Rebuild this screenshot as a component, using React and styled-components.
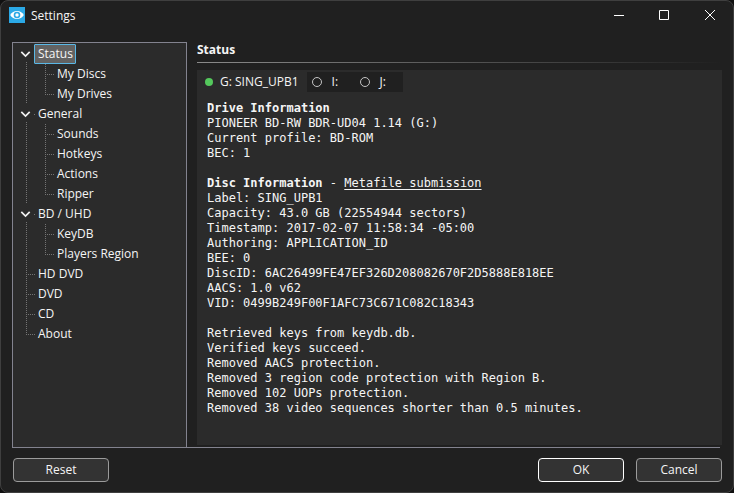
import React, { useState } from 'react'
import styled, { createGlobalStyle, css } from 'styled-components'

const colors = {
  window: '#202020',
  panel: '#2b2b2b',
  frame: '#3f3f3f',
  line: '#83838f',
  text: '#f5f5f5',
  dots: '#747474',
  accent: '#5ab8e6',
}

const GlobalStyle = createGlobalStyle`
  * {
    box-sizing: border-box;
  }

  body {
    margin: 0;
    background: #101010;
    color: ${colors.text};
    font: 12px/20px 'Open Sans', 'Noto Sans', sans-serif;
  }

  button, input {
    font: inherit;
    color: inherit;
  }
`

const Window = styled.div`
  display: flex;
  flex-direction: column;
  min-height: 100vh;
  background: ${colors.window};
  border: 1px solid ${colors.frame};
  border-radius: 8px;
`

const TitleBar = styled.header`
  display: flex;
  align-items: center;
  height: 28px;
  padding-left: 8px;
`

const Title = styled.h1`
  flex: 1;
  margin: 2px 0 0 6px;
  font-size: 12px;
  font-weight: 400;
`

const CaptionButton = styled.button`
  display: flex;
  align-items: center;
  justify-content: center;
  width: 46px;
  height: 28px;
  padding: 0;
  border: 0;
  background: none;
`

const Body = styled.main`
  flex: 1;
  display: flex;
  gap: 10px;
  padding: 13px 11px 0;
`

const Tree = styled.nav`
  flex: none;
  width: 175px;
  padding: 1px 4px;
  background: ${colors.panel};
  border: 1px solid ${colors.line};
  border-bottom: 0;
`

const Branch = styled.ul`
  margin: 0;
  padding: 0;
  list-style: none;
`

const Row = styled.div`
  display: flex;
  height: 20px;
`

const down = `repeating-linear-gradient(to bottom, ${colors.dots} 0 1px, transparent 1px 2px)`
const across = `repeating-linear-gradient(to right, ${colors.dots} 0 1px, transparent 1px 2px)`

const guides = {
  line: css`
    background: ${down} 9px 0 / 1px 20px no-repeat;
  `,
  tee: css`
    background: ${down} 9px 0 / 1px 20px no-repeat,
      ${across} 9px 10px / 9px 1px no-repeat;
  `,
  elbow: css`
    background: ${down} 9px 0 / 1px 10px no-repeat,
      ${across} 9px 10px / 9px 1px no-repeat;
  `,
  none: null,
}

const Guide = styled.span`
  flex: none;
  width: 19px;
  ${({ $kind }) => guides[$kind]}
`

const Toggle = styled.button`
  display: flex;
  align-items: center;
  flex: none;
  width: 19px;
  padding: 0 0 0 3px;
  border: 0;
  background: ${down} 9px 18px / 1px 2px no-repeat,
    ${across} 17px 10px / 1px 1px no-repeat;

  svg {
    transform: rotate(${({ $open }) => ($open ? 0 : -90)}deg);
  }
`

const Item = styled.button`
  margin-left: -2px;
  padding: 0 2px 0 3px;
  border: 1px solid ${({ $active }) => ($active ? colors.accent : 'transparent')};
  border-radius: 1px;
  background: ${({ $active }) => ($active ? '#626262' : 'none')};
  line-height: 18px;
  white-space: nowrap;
`

const Content = styled.section`
  flex: 1;
  display: flex;
  flex-direction: column;
  min-width: 0;
  margin-bottom: 2px;
`

const PageTitle = styled.h2`
  margin: 0 0 5px;
  font-size: 12px;
  line-height: 15px;
  font-weight: 700;
`

const Fade = styled.div`
  height: 1px;
  margin-bottom: 7px;
  background: linear-gradient(to right, #8a8a8a, ${colors.window});
`

const Panel = styled.div`
  flex: 1;
  padding: 2px 10px 0 8px;
  background: ${colors.panel};
`

const Drives = styled.div`
  display: flex;
  height: 20px;
`

const Drive = styled.label`
  display: flex;
  align-items: center;
  gap: 7px;
  margin-right: 8px;
`

const IdleDrives = styled.div`
  display: flex;
  background: ${colors.window};
`

const IdleDrive = styled.label`
  display: flex;
  align-items: center;
  gap: 10px;
  width: 48px;
  padding-left: 5px;
`

const DriveRadio = styled.input`
  appearance: none;
  width: 10px;
  height: 10px;
  margin: 0;
  border: 1px solid #c4c4c4;
  border-radius: 50%;

  &:checked {
    width: 8px;
    height: 8px;
    border: 0;
    background: #54c85c;
  }
`

const Report = styled.div`
  padding: 9px 0 0 2px;
  font: 12px/15px 'DejaVu Sans Mono', 'Liberation Mono', monospace;
`

const Block = styled.p`
  margin: 0 0 15px;
  white-space: pre-line;
`

const Link = styled.a`
  color: inherit;
  text-underline-offset: 2px;
`

const Rule = styled.hr`
  width: calc(100% - 24px);
  height: 1px;
  margin: 0 0 0 11px;
  border: 0;
  background: ${colors.line};
`

const Footer = styled.footer`
  display: flex;
  gap: 12px;
  padding: 10px 11px 10px 12px;
`

const Button = styled.button`
  width: ${({ $wide }) => ($wide ? 96 : 86)}px;
  height: 24px;
  padding: 0;
  border: 1px solid ${({ $primary }) => ($primary ? '#ffffff' : '#9b9b9b')};
  border-radius: 4px;
  background: #333333;
  line-height: 22px;

  &:first-child {
    margin-right: auto;
  }
`

const sections = [
  { name: 'Status', children: ['My Discs', 'My Drives'] },
  { name: 'General', children: ['Sounds', 'Hotkeys', 'Actions', 'Ripper'] },
  { name: 'BD / UHD', children: ['KeyDB', 'Players Region'] },
  { name: 'HD DVD' },
  { name: 'DVD' },
  { name: 'CD' },
  { name: 'About' },
]

const driveInfo = `PIONEER BD-RW BDR-UD04 1.14 (G:)
Current profile: BD-ROM
BEC: 1`

const discInfo = `Label: SING_UPB1
Capacity: 43.0 GB (22554944 sectors)
Timestamp: 2017-02-07 11:58:34 -05:00
Authoring: APPLICATION_ID
BEE: 0
DiscID: 6AC26499FE47EF326D208082670F2D5888E818EE
AACS: 1.0 v62
VID: 0499B249F00F1AFC73C671C082C18343`

const log = `Retrieved keys from keydb.db.
Verified keys succeed.
Removed AACS protection.
Removed 3 region code protection with Region B.
Removed 102 UOPs protection.
Removed 38 video sequences shorter than 0.5 minutes.`

function AppIcon() {
  return (
    <svg width="16" height="16" viewBox="0 0 16 16" aria-hidden="true">
      <rect width="16" height="16" fill="#2ba9e6" />
      <path d="M1.2 8C4 2.6 12 2.6 14.8 8C12 13.4 4 13.4 1.2 8Z" fill="#fff" />
      <circle cx="8" cy="8" r="3.3" fill="#2ba9e6" />
      <circle cx="8" cy="8" r="1.7" fill="#fff" />
    </svg>
  )
}

function CaptionIcon({ d }) {
  return (
    <svg width="12" height="12" viewBox="0 0 12 12" fill="none" stroke="#fff">
      <path d={d} />
    </svg>
  )
}

function SettingsTree() {
  const [selected, setSelected] = useState('Status')
  const [closed, setClosed] = useState({})

  const item = name => (
    <Item $active={selected === name} onClick={() => setSelected(name)}>
      {name}
    </Item>
  )

  return (
    <Tree aria-label="Settings sections">
      <Branch>
        {sections.map(({ name, children }, i) => {
          const last = i === sections.length - 1
          const open = !closed[name]

          return (
            <li key={name}>
              <Row>
                {children ? (
                  <Toggle
                    $open={open}
                    aria-label={`Toggle ${name}`}
                    aria-expanded={open}
                    onClick={() => setClosed({ ...closed, [name]: open })}
                  >
                    <svg width="11" height="8" viewBox="0 0 11 8" fill="none" stroke="#f0f0f0" strokeWidth="1.7">
                      <path d="M1.3 1.8L5.5 6L9.7 1.8" />
                    </svg>
                  </Toggle>
                ) : (
                  <Guide $kind={last ? 'elbow' : 'tee'} />
                )}
                {item(name)}
              </Row>
              {children && open && (
                <Branch>
                  {children.map((child, j) => (
                    <li key={child}>
                      <Row>
                        <Guide $kind={last ? 'none' : 'line'} />
                        <Guide $kind={j === children.length - 1 ? 'elbow' : 'tee'} />
                        {item(child)}
                      </Row>
                    </li>
                  ))}
                </Branch>
              )}
            </li>
          )
        })}
      </Branch>
    </Tree>
  )
}

function App() {
  return (
    <>
      <GlobalStyle />
      <Window>
        <TitleBar>
          <AppIcon />
          <Title>Settings</Title>
          <CaptionButton aria-label="Minimize">
            <CaptionIcon d="M2 6.5H12" />
          </CaptionButton>
          <CaptionButton aria-label="Maximize">
            <CaptionIcon d="M1.5 1.5H10.5V10.5H1.5Z" />
          </CaptionButton>
          <CaptionButton aria-label="Close">
            <CaptionIcon d="M1 1L11 11M11 1L1 11" />
          </CaptionButton>
        </TitleBar>

        <Body>
          <SettingsTree />

          <Content>
            <PageTitle>Status</PageTitle>
            <Fade />
            <Panel>
              <Drives>
                <Drive>
                  <DriveRadio type="radio" name="drive" defaultChecked />
                  G: SING_UPB1
                </Drive>
                <IdleDrives>
                  <IdleDrive>
                    <DriveRadio type="radio" name="drive" />
                    I:
                  </IdleDrive>
                  <IdleDrive>
                    <DriveRadio type="radio" name="drive" />
                    J:
                  </IdleDrive>
                </IdleDrives>
              </Drives>

              <Report>
                <Block>
                  <b>Drive Information</b>
                  {'\n' + driveInfo}
                </Block>
                <Block>
                  <b>Disc Information</b> - <Link href="#metafile">Metafile submission</Link>
                  {'\n' + discInfo}
                </Block>
                <Block>{log}</Block>
              </Report>
            </Panel>
          </Content>
        </Body>

        <Rule />

        <Footer>
          <Button $wide>Reset</Button>
          <Button $primary>OK</Button>
          <Button>Cancel</Button>
        </Footer>
      </Window>
    </>
  )
}

export default App
